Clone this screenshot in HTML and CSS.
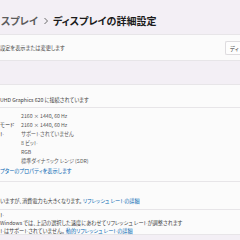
FILE: index.html
```html
<!DOCTYPE html>
<html lang="ja">
<head>
    <meta charset="UTF-8">
    <title>ディスプレイの詳細設定</title>
    <link rel="stylesheet" href="styles.css">
</head>
<body>
    <!-- パンくずタイトル -->
    <div class="header">
        <span class="crumb">スプレイ</span>
        <svg class="chevron" width="6" height="8" viewBox="0 0 6 8"><polyline points="1.5,1 4.5,4 1.5,7" fill="none" stroke="#6b6b6b" stroke-width="1"/></svg>
        <span class="title">ディスプレイの詳細設定</span>
    </div>

    <!-- ディスプレイの選択 -->
    <div class="card select-card">
        <span class="desc">設定を表示または変更します</span>
        <span class="dropdown">ディ</span>
    </div>

    <div class="gap"></div>

    <!-- ディスプレイ情報 -->
    <div class="card info-head">
        <span class="desc">UHD Graphics 620 に接続されています</span>
    </div>
    <div class="card info-body">
        <div class="rows">
            <span class="label"></span><span class="value">2160 × 1440, 60 Hz</span>
            <span class="label">モード</span><span class="value">2160 × 1440, 60 Hz</span>
            <span class="label">ト</span><span class="value">サポートされていません</span>
            <span class="label"></span><span class="value">8 ビット</span>
            <span class="label"></span><span class="value">RGB</span>
            <span class="label"></span><span class="value">標準ダイナミック レンジ (SDR)</span>
        </div>
        <a class="link">プターのプロパティを表示します</a>
    </div>

    <!-- リフレッシュ レート -->
    <div class="card rate-card">
        <span class="desc">いますが、消費電力も大きくなります。 <a class="link">リフレッシュ レートの詳細</a></span>
    </div>
    <div class="card dyn-card">
        <div class="card-title">ト</div>
        <div class="desc">Windows では、上記の選択した速度にあわせてリフレッシュ レートが調整されます</div>
        <div class="desc">トはサポートされていません。 <a class="link">動的リフレッシュ レートの詳細</a></div>
    </div>
</body>
</html>
```

FILE: styles.css
```css
/* 全体 */
body {
    margin: 0;
    width: 240px;
    height: 240px;
    overflow: hidden;
    background-color: #f3eff5;
    font-family: "Noto Sans CJK JP", "Noto Sans", sans-serif;
    font-feature-settings: "palt";
    color: #1b1b1b;
}

/* タイトル */
.header {
    height: 34px;
    box-sizing: border-box;
    padding-top: 6px;
    display: flex;
    align-items: center;
    font-size: 10px;
    font-weight: 700;
    white-space: nowrap;
}

.crumb {
    color: #5c5c5c;
    margin-left: 1px;
}

.chevron {
    margin: 1px 4px 0 5px;
}

/* カード */
.card {
    background: #fbfbfb;
    border-top: 1px solid #e7e5e8;
    font-size: 5.2px;
    white-space: nowrap;
}

.desc {
    color: #404040;
    line-height: 8px;
}

.link {
    color: #0063b1;
}

.select-card {
    height: 24px;
    border-bottom: 1px solid #e7e5e8;
    display: flex;
    align-items: center;
    justify-content: space-between;
    padding-top: 1px;
}

.dropdown {
    width: 15px;
    height: 14px;
    box-sizing: border-box;
    padding-left: 4px;
    line-height: 13px;
    border: 1px solid #dedcdf;
    border-right: none;
    border-radius: 2px 0 0 2px;
    background: #fdfdfd;
    color: #1b1b1b;
}

.gap {
    height: 23px;
}

.info-head {
    height: 23px;
    box-sizing: border-box;
    padding-top: 11px;
}

.info-body {
    height: 74px;
    box-sizing: border-box;
    padding-top: 3px;
}

.rows {
    display: grid;
    grid-template-columns: 21px auto;
    grid-auto-rows: 9px;
    line-height: 9px;
}

.label {
    color: #2a2a2a;
}

.value {
    color: #5a5a5a;
}

.info-body .link {
    display: block;
    line-height: 9px;
    margin-top: 1px;
}

.rate-card {
    height: 28px;
    box-sizing: border-box;
    padding-top: 15px;
}

.dyn-card {
    height: 26px;
    box-sizing: border-box;
    padding-top: 1px;
    border-bottom: 1px solid #e7e5e8;
}

.card-title {
    line-height: 8px;
    color: #1b1b1b;
}
```
